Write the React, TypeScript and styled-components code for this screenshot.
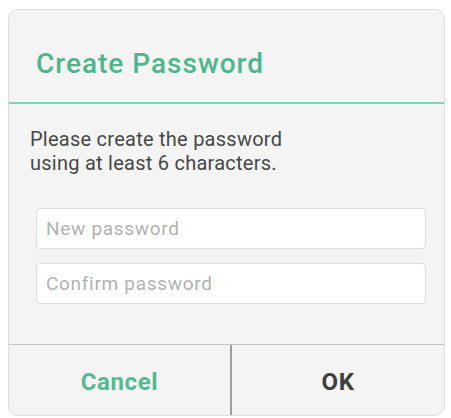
import styled, { createGlobalStyle } from 'styled-components';

const GlobalStyle = createGlobalStyle`
  html, body {
    margin: 0;
    padding: 0;
    background: #ffffff;
    font-family: Roboto, 'Liberation Sans', Arial, sans-serif;
  }
`;

const Page = styled.div`
  width: 451px;
  height: 418px;
  padding: 9px 0 0 8px;
  box-sizing: border-box;
`;

const Dialog = styled.div`
  width: 437px;
  height: 407px;
  box-sizing: border-box;
  border: 1px solid #dedede;
  border-radius: 10px;
  background: #f4f4f4;
  overflow: hidden;
  display: flex;
  flex-direction: column;
`;

const Header = styled.div`
  height: 94px;
  box-sizing: border-box;
  padding: 37px 0 0 27px;
  border-bottom: 2px solid #7fd2b3;
`;

const Title = styled.h1`
  margin: 0;
  font-size: 28px;
  line-height: 33px;
  font-weight: 500;
  letter-spacing: 1px;
  color: #4db68c;
`;

const Body = styled.div`
  flex: 1;
  padding: 23px 22px 0 21px;
`;

const Message = styled.p`
  margin: 0 0 33px;
  font-size: 20px;
  line-height: 24px;
  letter-spacing: 0.25px;
  color: #474747;
`;

const Fields = styled.div`
  display: flex;
  flex-direction: column;
  gap: 14px;
  padding-left: 6px;
`;

const Field = styled.input`
  width: 390px;
  height: 41px;
  box-sizing: border-box;
  border: 1px solid #dddddd;
  border-radius: 4px;
  background: #ffffff;
  padding: 0 9px;
  font-family: inherit;
  font-size: 19px;
  letter-spacing: 0.7px;
  color: #333;
  outline: none;
  &::placeholder {
    color: #b2b2b2;
  }
`;

const Footer = styled.div`
  height: 70px;
  flex-shrink: 0;
  display: grid;
  grid-template-columns: 221px 1fr;
  border-top: 1px solid #c4c4c4;
`;

const ActionButton = styled.button<{ $primary?: boolean }>`
  border: none;
  background: transparent;
  font-family: inherit;
  font-size: 24px;
  font-weight: 700;
  letter-spacing: 0.6px;
  color: ${(p) => (p.$primary ? '#3f3f3f' : '#55ba92')};
  border-left: ${(p) => (p.$primary ? '2px solid #9e9e9e' : 'none')};
  padding: 4px 0 0;
  cursor: pointer;
`;

const App = () => {
  return (
    <Page>
      <GlobalStyle />
      <Dialog>
        <Header>
          <Title>Create Password</Title>
        </Header>
        <Body>
          <Message>
            Please create the password
            <br />
            using at least 6 characters.
          </Message>
          <Fields>
            <Field type="password" placeholder="New password" />
            <Field type="password" placeholder="Confirm password" />
          </Fields>
        </Body>
        <Footer>
          <ActionButton>Cancel</ActionButton>
          <ActionButton $primary>OK</ActionButton>
        </Footer>
      </Dialog>
    </Page>
  );
};

export default App;
